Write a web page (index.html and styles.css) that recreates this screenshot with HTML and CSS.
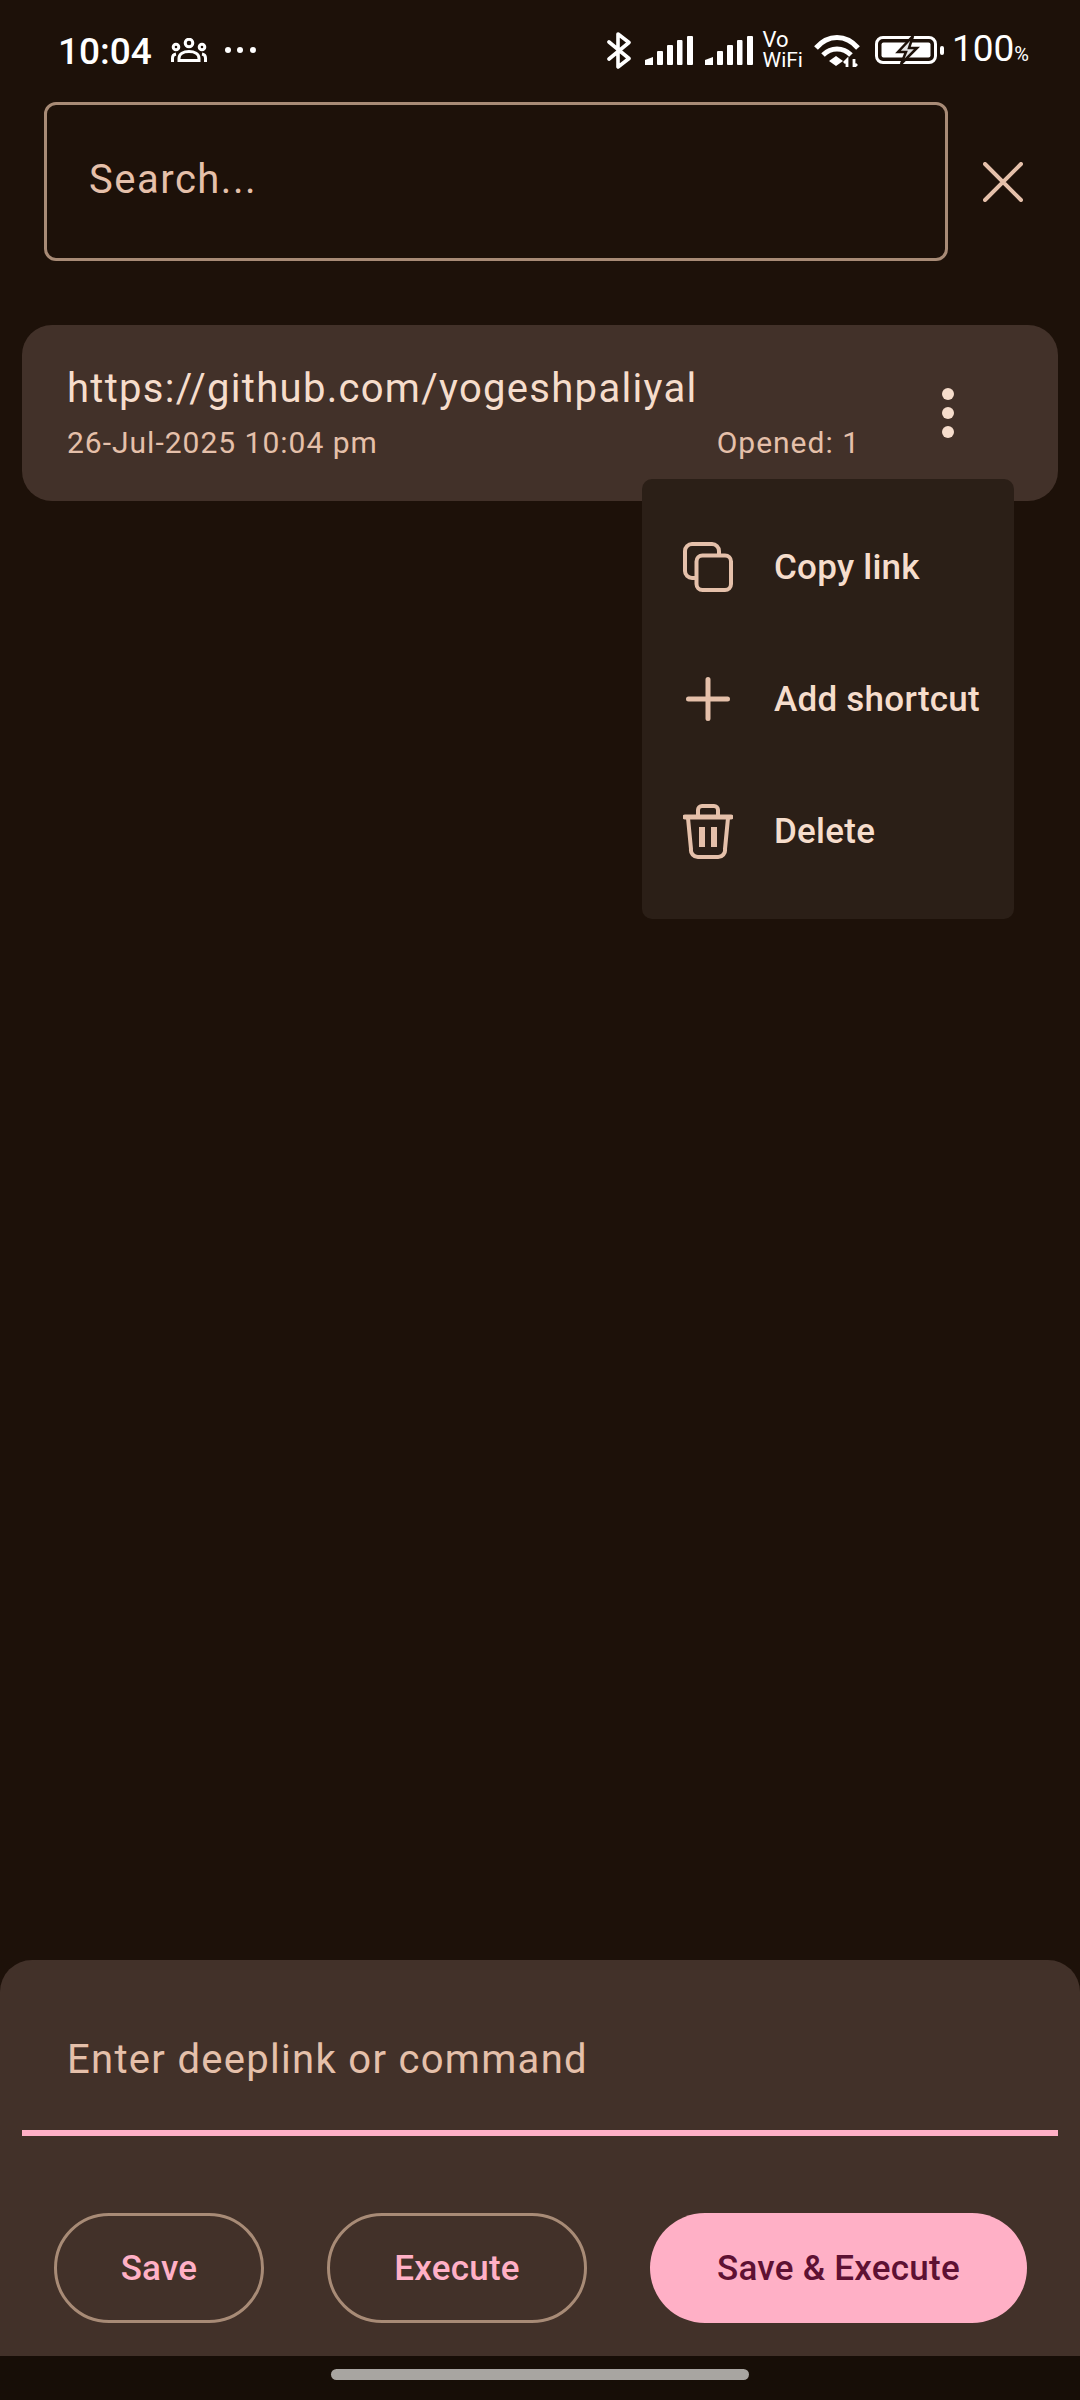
FILE: index.html
```html
<!DOCTYPE html>
<html lang="en">
<head>
    <meta charset="UTF-8">
    <meta name="viewport" content="width=device-width, initial-scale=1.0">
    <title>Deeplink history</title>
    <link rel="stylesheet" href="styles.css">
</head>
<body>
    <!-- Status bar -->
    <div class="status-bar">
        <span class="clock">10:04</span>
        <svg class="ic-group" width="36" height="24" viewBox="0 0 36 24" fill="none" stroke="#fff" stroke-width="3">
            <circle cx="18" cy="5" r="3.800"/>
            <circle cx="5" cy="9" r="2.800"/>
            <circle cx="31" cy="9" r="2.800"/>
            <path d="M8 22.500v-2c0-4.500 4.500-7 10-7s10 2.500 10 7v2z"/>
            <path d="M1.500 24v-4c0-2 1-3.500 3.500-4M34.500 24v-4c0-2-1-3.500-3.500-4"/>
        </svg>
        <div class="dots-h"><i></i><i></i><i></i></div>
        <div class="status-right">
            <svg class="ic-bt" width="24" height="37" viewBox="0 0 24 37" fill="none" stroke="#fff" stroke-width="3.600" stroke-linejoin="round" stroke-linecap="round">
                <path d="M2 10l20 16.500L11 35V2l11 8.500L2 27"/>
            </svg>
            <svg class="ic-signal" width="48" height="29" viewBox="0 0 48 29" fill="#fff">
                <path d="M0 24l8-3v8H0z"/>
                <rect x="12" y="15" width="6" height="14" rx="1"/>
                <rect x="22" y="9" width="6" height="20" rx="1"/>
                <rect x="32" y="4" width="5.500" height="25" rx="1"/>
                <rect x="42" y="0" width="6" height="29" rx="1"/>
            </svg>
            <svg class="ic-signal second" width="48" height="29" viewBox="0 0 48 29" fill="#fff">
                <path d="M0 24l8-3v8H0z"/>
                <rect x="12" y="15" width="6" height="14" rx="1"/>
                <rect x="22" y="9" width="6" height="20" rx="1"/>
                <rect x="32" y="4" width="5.500" height="25" rx="1"/>
                <rect x="42" y="0" width="6" height="29" rx="1"/>
            </svg>
            <div class="vowifi"><span class="vo">Vo</span><span>WiFi</span></div>
            <svg class="ic-wifi" width="46" height="33" viewBox="0 0 46 33" fill="none" stroke="#fff" stroke-width="5">
                <path d="M2 14C14 0 32 0 44 14"/>
                <path d="M9 21c8-8 20-8 28 0"/>
                <path d="M15 27l7-5 7 5-7 5z" fill="#fff" stroke="none"/>
                <path d="M33 33v-7l-3 3M40 25v8l3-3" stroke-width="2.800"/>
            </svg>
            <svg class="ic-battery" width="69" height="28" viewBox="0 0 69 28">
                <rect x="1.500" y="1.500" width="59" height="25" rx="6.500" fill="none" stroke="#fff" stroke-width="3"/>
                <rect x="6.500" y="6.500" width="49" height="15" rx="2" fill="#fff"/>
                <rect x="65" y="10" width="4" height="9" rx="2" fill="#fff"/>
                <path d="M38 0L23 16h8l-5 12 16-16h-8z" fill="#e4e4e4" stroke="#1d1109" stroke-width="2.500"/>
            </svg>
            <span class="batt-text">100<small>%</small></span>
        </div>
    </div>

    <!-- Search -->
    <div class="search-row">
        <div class="search-box">Search...</div>
        <svg class="ic-close" width="40" height="40" viewBox="0 0 40 40" fill="none" stroke="#e5c0aa" stroke-width="4" stroke-linecap="round">
            <path d="M2 2l36 36M38 2L2 38"/>
        </svg>
    </div>

    <!-- History list -->
    <div class="list">
        <div class="card">
            <div class="card-info">
                <div class="card-url">https://github.com/yogeshpaliyal</div>
                <div class="card-meta">
                    <span>26-Jul-2025 10:04 pm</span>
                    <span>Opened: 1</span>
                </div>
            </div>
            <div class="kebab"><i></i><i></i><i></i></div>

            <div class="menu">
                <div class="menu-item">
                    <svg width="50" height="50" viewBox="0 0 50 50" fill="none" stroke="#e5c0aa" stroke-width="4">
                        <rect x="13.500" y="13.500" width="34.500" height="34.500" rx="6"/>
                        <path d="M36 12V9a7 7 0 0 0-7-7H9a7 7 0 0 0-7 7v20a7 7 0 0 0 7 7h3"/>
                    </svg>
                    <span>Copy link</span>
                </div>
                <div class="menu-item">
                    <svg width="50" height="50" viewBox="0 0 50 50" fill="none" stroke="#e5c0aa" stroke-width="5" stroke-linecap="round">
                        <path d="M25 5.500v39M5.500 25h39"/>
                    </svg>
                    <span>Add shortcut</span>
                </div>
                <div class="menu-item">
                    <svg width="50" height="55" viewBox="0 0 50 55" fill="none" stroke="#e5c0aa" stroke-width="4">
                        <path d="M15 12V6a4 4 0 0 1 4-4h12a4 4 0 0 1 4 4v6"/>
                        <path d="M2 13h46" stroke-width="5" stroke-linecap="round"/>
                        <path d="M5 14l3 31a7 7 0 0 0 7 8h20a7 7 0 0 0 7-8l3-31"/>
                        <path d="M19 23v20M31 23v20" stroke-width="6"/>
                    </svg>
                    <span>Delete</span>
                </div>
            </div>
        </div>
    </div>

    <!-- Bottom sheet with the input -->
    <div class="sheet">
        <div class="field">Enter deeplink or command</div>
        <div class="actions">
            <div class="btn btn-outline save">Save</div>
            <div class="btn btn-outline execute">Execute</div>
            <div class="btn btn-filled">Save &amp; Execute</div>
        </div>
    </div>

    <div class="nav-bar"><div class="home-pill"></div></div>
</body>
</html>
```

FILE: styles.css
```css
* {
    box-sizing: border-box;
}

body {
    margin: 0;
    width: 1080px;
    height: 2400px;
    overflow: hidden;
    display: flex;
    flex-direction: column;
    background-color: #1d1109;
    font-family: Roboto, 'Noto Sans', sans-serif;
    color: #f6ddcc;
}

/* Status bar */
.status-bar {
    height: 102px;
    flex-shrink: 0;
    display: flex;
    align-items: center;
    padding: 0 51px 2px 58px;
    color: #fff;
}

.clock {
    margin-top: 3px;
    font-size: 37px;
    font-weight: 500;
    line-height: 44px;
}

.ic-group {
    margin-left: 19px;
}

.dots-h {
    display: flex;
    gap: 6.500px;
    margin-left: 18px;
}

.dots-h i {
    width: 6px;
    height: 6px;
    border-radius: 50%;
    background-color: #fff;
}

.status-right {
    margin-left: auto;
    display: flex;
    align-items: center;
}

.ic-signal {
    margin-left: 14px;
}

.ic-signal.second {
    margin-left: 12px;
}

.vowifi {
    display: flex;
    flex-direction: column;
    margin-left: 10px;
    font-size: 21px;
    line-height: 20px;
}

.vowifi .vo {
    font-size: 22px;
}

.ic-wifi {
    margin-left: 11px;
}

.ic-battery {
    margin-left: 15px;
}

.batt-text {
    margin-top: 3px;
    margin-left: 8px;
    font-size: 37px;
    line-height: 44px;
}

.batt-text small {
    font-size: 20px;
}

/* Search */
.search-row {
    display: flex;
    align-items: center;
    padding-left: 44px;
}

.search-box {
    width: 904px;
    height: 159px;
    display: flex;
    align-items: center;
    padding: 0 0 4px 42px;
    border: 3px solid #a88b76;
    border-radius: 12px;
    font-size: 40px;
    letter-spacing: 1.500px;
    color: #e5c0aa;
}

.ic-close {
    margin-left: 35px;
}

/* List */
.list {
    flex: 1;
    padding: 64px 22px 0;
}

.card {
    position: relative;
    height: 176px;
    display: flex;
    align-items: center;
    padding-left: 45px;
    background-color: #423129;
    border-radius: 30px;
}

.card-info {
    width: 793px;
    padding-bottom: 1px;
}

.card-url {
    font-size: 40px;
    line-height: 52px;
    letter-spacing: 1.300px;
}

.card-meta {
    display: flex;
    justify-content: space-between;
    margin-top: 8px;
    font-size: 30px;
    line-height: 40px;
    letter-spacing: 1px;
    color: #e5c0aa;
}

.kebab {
    display: flex;
    flex-direction: column;
    gap: 7px;
    margin-left: 82px;
}

.kebab i {
    width: 12px;
    height: 12px;
    border-radius: 50%;
    background-color: #f6ddcc;
}

/* Popup menu sits over the card */
.menu {
    position: absolute;
    top: 154px;
    right: 44px;
    width: 372px;
    padding: 22px 0;
    background-color: #2b1f17;
    border-radius: 10px;
}

.menu-item {
    height: 132px;
    display: flex;
    align-items: center;
    padding-left: 41px;
    font-size: 35px;
    font-weight: 500;
    letter-spacing: 0.250px;
}

.menu-item span {
    margin-left: 41px;
}

/* Bottom sheet */
.sheet {
    height: 396px;
    flex-shrink: 0;
    padding: 0 0 33px;
    background-color: #423129;
    border-radius: 32px 32px 0 0;
}

.field {
    height: 176px;
    margin: 0 22px;
    padding: 74px 0 0 45px;
    border-bottom: 6px solid #ffb0c6;
    font-size: 40px;
    line-height: 52px;
    letter-spacing: 1.300px;
    color: #e5c0aa;
}

.actions {
    display: flex;
    justify-content: space-between;
    margin-top: 77px;
    padding: 0 53px 0 54px;
}

.btn {
    height: 110px;
    display: flex;
    align-items: center;
    justify-content: center;
    border-radius: 55px;
    font-size: 35px;
    font-weight: 500;
    letter-spacing: 0.250px;
}

.btn-outline {
    border: 3px solid #a88b76;
    color: #ffb0c6;
}

.save {
    width: 210px;
}

.execute {
    width: 260px;
}

.btn-filled {
    width: 377px;
    background-color: #ffb0c6;
    color: #5e1133;
}

/* Navigation bar */
.nav-bar {
    height: 44px;
    flex-shrink: 0;
    display: flex;
    justify-content: center;
    padding-top: 13px;
    background-color: #170e07;
}

.home-pill {
    width: 418px;
    height: 11px;
    border-radius: 6px;
    background-color: #a8a5a1;
}
```
